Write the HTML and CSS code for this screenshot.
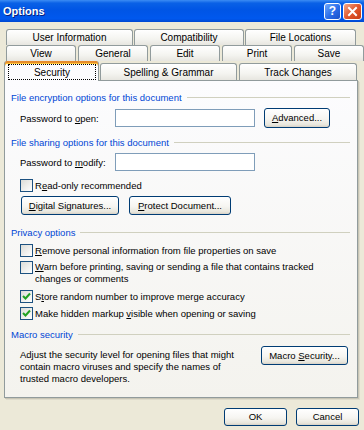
FILE: index.html
```html
<!DOCTYPE html>
<html lang="en">
<head>
  <meta charset="UTF-8" />
  <title>Options</title>
  <link rel="stylesheet" href="styles.css">
</head>
<body>
  <!-- Title bar -->
  <div class="titlebar">
    <span class="title">Options</span>
    <div class="caption-buttons">
      <div class="cap-btn help">?</div>
      <div class="cap-btn close">
        <svg width="11" height="11" viewBox="0 0 11 11">
          <path d="M2 2 L9 9 M9 2 L2 9" stroke="#fff" stroke-width="2" stroke-linecap="square" />
        </svg>
      </div>
    </div>
  </div>

  <!-- Tabs -->
  <div class="tabs">
    <div class="tab-row row-top">
      <div class="tab t-user">User Information</div>
      <div class="tab t-compat">Compatibility</div>
      <div class="tab t-files">File Locations</div>
    </div>
    <div class="tab-row row-mid">
      <div class="tab">View</div>
      <div class="tab">General</div>
      <div class="tab">Edit</div>
      <div class="tab">Print</div>
      <div class="tab">Save</div>
    </div>
    <div class="tab-row row-front">
      <div class="tab tab-active"><span class="focus">Security</span></div>
      <div class="tab t-spelling">Spelling &amp; Grammar</div>
      <div class="tab t-track">Track Changes</div>
    </div>
  </div>

  <!-- Security page -->
  <div class="panel">
    <div class="group-title">File encryption options for this document</div>
    <div class="field-row first">
      <span class="field-label">Password to <u>o</u>pen:</span>
      <div class="textbox"></div>
      <button class="btn btn-advanced"><u>A</u>dvanced...</button>
    </div>

    <div class="group-title gap-8">File sharing options for this document</div>
    <div class="field-row second">
      <span class="field-label">Password to <u>m</u>odify:</span>
      <div class="textbox"></div>
    </div>
    <div class="check gap-8">
      <span class="box"></span>
      <span>R<u>e</u>ad-only recommended</span>
    </div>
    <div class="button-row">
      <button class="btn btn-sign"><u>D</u>igital Signatures...</button>
      <button class="btn btn-protect"><u>P</u>rotect Document...</button>
    </div>

    <div class="group-title gap-11">Privacy options</div>
    <div class="check gap-5">
      <span class="box"></span>
      <span><u>R</u>emove personal information from file properties on save</span>
    </div>
    <div class="check gap-4 two-line">
      <span class="box"></span>
      <span><u>W</u>arn before printing, saving or sending a file that contains tracked changes or comments</span>
    </div>
    <div class="check gap-5">
      <span class="box checked">
        <svg width="11" height="11" viewBox="0 0 11 11"><path d="M2 5 L4.5 7.5 L9 2.5" fill="none" stroke="#21A121" stroke-width="2" /></svg>
      </span>
      <span>S<u>t</u>ore random number to improve merge accuracy</span>
    </div>
    <div class="check gap-4">
      <span class="box checked">
        <svg width="11" height="11" viewBox="0 0 11 11"><path d="M2 5 L4.5 7.5 L9 2.5" fill="none" stroke="#21A121" stroke-width="2" /></svg>
      </span>
      <span>Make hidden markup <u>v</u>isible when opening or saving</span>
    </div>

    <div class="group-title gap-8">Macro security</div>
    <div class="macro-row">
      <div class="macro-text">Adjust the security level for opening files that might contain macro viruses and specify the names of trusted macro developers.</div>
      <button class="btn btn-macro">Macro <u>S</u>ecurity...</button>
    </div>
  </div>

  <!-- Dialog buttons -->
  <div class="footer">
    <button class="btn btn-ok">OK</button>
    <button class="btn btn-cancel">Cancel</button>
  </div>
</body>
</html>
```

FILE: styles.css
```css
* {
  box-sizing: border-box;
}

body {
  margin: 0;
  width: 364px;
  height: 430px;
  overflow: hidden;
  background-color: #ECE9D8;
  font-family: "Liberation Sans", Arial, sans-serif;
  font-size: 9.5px;
  color: #000;
}

u {
  text-underline-offset: 1px;
}

/* title bar */
.titlebar {
  height: 22px;
  display: flex;
  align-items: center;
  justify-content: space-between;
  padding: 0 2px 0 3px;
  background: linear-gradient(#3C8CF4 0%, #0A61E6 14%, #0055E5 45%, #0058EE 85%, #0048D0 100%);
}

.title {
  color: #fff;
  font-weight: bold;
  font-size: 11px;
  text-shadow: 1px 1px 0 #0A1E7A;
}

.caption-buttons {
  display: flex;
  gap: 2px;
}

.cap-btn {
  width: 17px;
  height: 17px;
  border: 1px solid #fff;
  border-radius: 3px;
  display: flex;
  align-items: center;
  justify-content: center;
  color: #fff;
  font-weight: bold;
  font-size: 12px;
}

.help {
  background: linear-gradient(135deg, #6FA8FD, #2A6CE8 55%, #1A50C8);
}

.close {
  width: 19px;
  background: linear-gradient(135deg, #F3A98A, #E2582E 50%, #C73C14);
}

/* tabs */
.tabs {
  margin-top: 7px;
}

.tab-row {
  display: flex;
  height: 16px;
}

.row-top {
  padding-left: 6px;
  gap: 1px;
}

.row-mid {
  padding-left: 6px;
  gap: 2px;
}

.row-mid .tab {
  flex: 1;
}

.row-front {
  padding-left: 4px;
  height: 19px;
  align-items: flex-end;
  gap: 1px;
}

.tab {
  height: 16px;
  border: 1px solid #919B9C;
  border-bottom: none;
  border-radius: 3px 3px 0 0;
  background: linear-gradient(#FFFFFF, #F4F4F0 60%, #E7E6E0);
  display: flex;
  align-items: center;
  justify-content: center;
  white-space: nowrap;
  font-size: 10px;
}

.row-front .tab {
  height: 17px;
}

.t-user { width: 127px; }
.t-compat { width: 110px; }
.t-files { width: 111px; }
.t-spelling { width: 137px; }
.t-track { width: 118px; margin-left: 1px; }

.row-front .tab-active {
  width: 95px;
  height: 20px;
  margin-bottom: -1px;
  position: relative;
  z-index: 1;
  background: #FCFCFE;
  border-top: none;
  box-shadow: inset 0 2px 0 #E68B2C, inset 0 3px 0 #FFC73C;
  padding: 3px 2px 1px 3px;
}

.focus {
  flex: 1;
  height: 100%;
  border: 1px dotted #000;
  display: flex;
  align-items: center;
  justify-content: center;
}

/* page */
.panel {
  margin-left: 4px;
  width: 354px;
  height: 318px;
  border: 1px solid #919B9C;
  background: linear-gradient(#FCFCFE, #F4F3EE);
  box-shadow: 1px 1px 0 #C8C5B5, 2px 2px 0 #DEDBCB;
  padding: 10px 7px 0 6px;
}

.group-title {
  display: flex;
  align-items: center;
  gap: 5px;
  height: 13px;
  line-height: 13px;
  color: #0046D5;
  white-space: nowrap;
}

.group-title::after {
  content: "";
  flex: 1;
  height: 1px;
  background-color: #D0D0BF;
}

.gap-4 { margin-top: 4px; }
.gap-5 { margin-top: 5px; }
.gap-8 { margin-top: 8px; }
.gap-11 { margin-top: 11px; }

.field-row {
  display: flex;
  align-items: center;
  margin: 4px 0 0 9px;
}

.field-row.first { height: 20px; }
.field-row.second { height: 18px; }

.field-label {
  width: 95px;
}

.textbox {
  width: 140px;
  height: 18px;
  border: 1px solid #7F9DB9;
  background-color: #fff;
}

.btn {
  display: block;
  font: inherit;
  color: #000;
  height: 19px;
  line-height: 17px;
  padding: 0;
  text-align: center;
  border: 1px solid #003C74;
  border-radius: 3px;
  background: linear-gradient(#FFFFFF, #F6F5F1 55%, #E8E6DC 88%, #D6D0C5);
  white-space: nowrap;
}

.btn-advanced {
  width: 66px;
  height: 20px;
  line-height: 18px;
  margin-left: 9px;
}

.check {
  display: flex;
  align-items: flex-start;
  gap: 2px;
  margin-left: 9px;
  line-height: 13px;
}

.check.two-line {
  line-height: 12px;
}

.box {
  flex: none;
  width: 13px;
  height: 13px;
  border: 1px solid #1C5180;
  background: linear-gradient(135deg, #DCDCD7, #FFFFFF);
  display: flex;
  align-items: center;
  justify-content: center;
}

.button-row {
  display: flex;
  gap: 10px;
  margin: 4px 0 0 10px;
}

.btn-sign { width: 98px; }
.btn-protect { width: 102px; }

.macro-row {
  display: flex;
  justify-content: space-between;
  margin: 5px 2px 0 9px;
}

.macro-text {
  width: 225px;
  padding-top: 3px;
  line-height: 12px;
}

.btn-macro {
  width: 87px;
}

/* dialog buttons */
.footer {
  display: flex;
  justify-content: flex-end;
  gap: 9px;
  margin-top: 10px;
  padding-right: 5px;
}

.btn-ok,
.btn-cancel {
  width: 63px;
  height: 18px;
  line-height: 16px;
}
```
